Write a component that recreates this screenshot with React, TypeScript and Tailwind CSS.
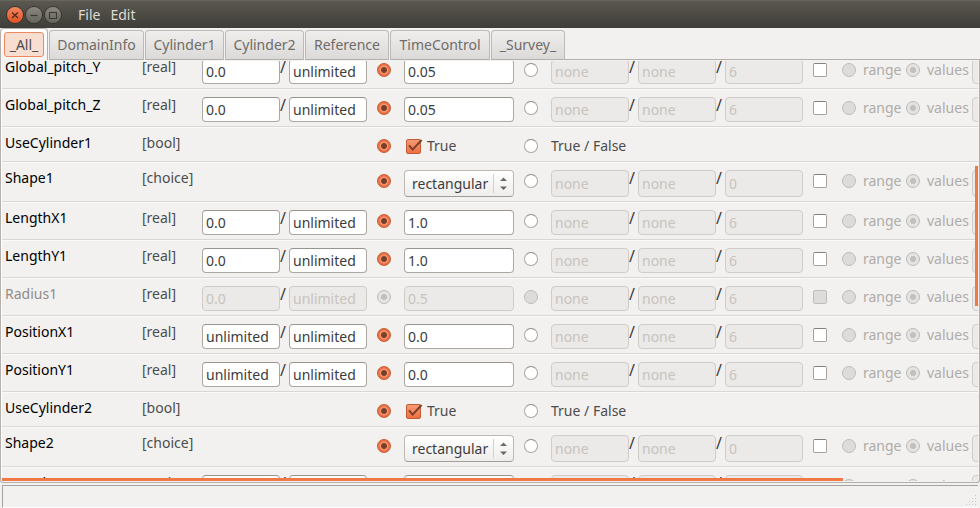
import { useLayoutEffect, useRef } from "react";
import clsx from "clsx";

type Kind = "real" | "bool" | "choice";

interface Param {
  name: string;
  kind: Kind;
  value: string;
  min?: string;
  disabled?: boolean;
}

const tabs = [
  { label: "DomainInfo", width: "w-[95px]" },
  { label: "Cylinder1", width: "w-[79px]" },
  { label: "Cylinder2", width: "w-[79px]" },
  { label: "Reference", width: "w-[84px]" },
  { label: "TimeControl", width: "w-[100px]" },
  { label: "_Survey_", width: "w-[74px]" },
];

const params: Param[] = [
  { name: "Global_pitch_Y", kind: "real", min: "0.0", value: "0.05" },
  { name: "Global_pitch_Z", kind: "real", min: "0.0", value: "0.05" },
  { name: "UseCylinder1", kind: "bool", value: "True" },
  { name: "Shape1", kind: "choice", value: "rectangular" },
  { name: "LengthX1", kind: "real", min: "0.0", value: "1.0" },
  { name: "LengthY1", kind: "real", min: "0.0", value: "1.0" },
  { name: "Radius1", kind: "real", min: "0.0", value: "0.5", disabled: true },
  { name: "PositionX1", kind: "real", min: "unlimited", value: "0.0" },
  { name: "PositionY1", kind: "real", min: "unlimited", value: "0.0" },
  { name: "UseCylinder2", kind: "bool", value: "True" },
  { name: "Shape2", kind: "choice", value: "rectangular" },
  { name: "LengthX2", kind: "real", min: "0.0", value: "1.0" },
];

function Field({ label, value, disabled, tall }: { label: string; value: string; disabled?: boolean; tall?: boolean }) {
  return (
    <input
      type="text"
      aria-label={label}
      defaultValue={value}
      disabled={disabled}
      className={clsx(
        "mt-2 w-full min-w-0 rounded-[4px] border px-[3px] text-sm outline-none",
        tall ? "h-[27px]" : "h-[25px]",
        disabled
          ? "border-[#cfccc9] bg-[#ebeae8] text-[#c8c3be]"
          : "border-[#aba7a2] border-t-[#98948f] bg-white text-[#3c3c3c]",
      )}
    />
  );
}

function Slash() {
  return <span className="pt-1.5 text-base leading-5 text-[#3c3c3c]">/</span>;
}

function Radio({ label, group, checked, disabled }: { label: string; group: string; checked?: boolean; disabled?: boolean }) {
  return (
    <input
      type="radio"
      aria-label={label}
      name={group}
      defaultChecked={checked}
      disabled={disabled}
      className={clsx(
        "mt-3 size-3.5 shrink-0 appearance-none rounded-full border",
        disabled && "border-[#bfbcb9] bg-[#dddcda]",
        disabled && checked && "bg-[radial-gradient(circle,#c2bfbc_0,#c2bfbc_2.5px,#e4e3e1_3.5px)]",
        !disabled && checked && "border-[#c25a33] bg-[radial-gradient(circle,#7a3f29_0,#7a3f29_2.5px,#f79a74_3.5px,#ee6f42_5px)]",
        !disabled && !checked && "border-[#aaa6a2] border-t-[#8f8b87] bg-white",
      )}
    />
  );
}

function TrueBox({ name }: { name: string }) {
  return (
    <label className="mt-[9px] flex h-5 items-center gap-1.5 pl-0.5 text-sm leading-5 text-[#4c4c4c]">
      <span className="relative size-[15px]">
        <input
          type="checkbox"
          name={name}
          defaultChecked
          className="block size-[15px] appearance-none rounded-[2px] border border-[#c25a33] bg-linear-to-b from-[#f79a74] to-[#ee6f42]"
        />
        <svg viewBox="0 0 17 17" className="pointer-events-none absolute -top-px left-0 size-[17px]" aria-hidden="true">
          <path d="M3 7.4 L6.6 11.6 L15.6 2" fill="none" stroke="#7a3f29" strokeWidth="2" />
        </svg>
      </span>
      True
    </label>
  );
}

function Choice({ name, value }: { name: string; value: string }) {
  return (
    <div className="relative mt-2">
      <select
        aria-label={name}
        defaultValue={value}
        className="block h-[27px] w-full appearance-none rounded-[4px] border border-[#bdb9b5] border-b-[#a19d99] bg-linear-to-b from-white to-[#eeedeb] pl-[7px] text-sm text-[#3c3c3c] outline-none"
      >
        <option>rectangular</option>
        <option>circular</option>
      </select>
      <svg viewBox="0 0 22 27" className="pointer-events-none absolute top-0 right-0 h-[27px] w-[22px]" aria-hidden="true">
        <path d="M1.5 4V23" stroke="#d3d0cd" />
        <path d="M8 11L11.5 7.5L15 11ZM8 16.5L11.5 20L15 16.5Z" fill="#6a6764" />
      </svg>
    </div>
  );
}

function Row({ param }: { param: Param }) {
  const { name, kind, value, min, disabled } = param;
  const tall = kind === "choice";
  return (
    <div
      role="group"
      aria-label={name}
      className={clsx(
        "grid shrink-0 grid-cols-[137px_60px_78px_9px_78px_10px_27px_110px_10px_27px_78px_9px_78px_9px_78px_10px_29px_21px_43px_21px_45px_78px] items-start border-b border-b-[#d9d7d5] pl-[3px] text-sm text-[#4c4c4c] shadow-[inset_0_1px_0_#fbfafa]",
        kind === "real" && "h-[38px]",
        kind === "bool" && "h-[35px]",
        kind === "choice" && "h-10",
      )}
    >
      <span className={clsx("pt-1.5 leading-5", disabled ? "text-[#8f8c89]" : "text-black")}>{name}</span>
      <span className="pt-1.5 leading-5">[{kind}]</span>
      {kind === "real" ? (
        <>
          <Field label={`${name} minimum`} value={min ?? ""} disabled={disabled} />
          <Slash />
          <Field label={`${name} maximum`} value="unlimited" disabled={disabled} />
        </>
      ) : (
        <span className="col-span-3" />
      )}
      <span />
      <Radio label={`${name} fixed`} group={`${name}-mode`} checked disabled={disabled} />
      {kind === "real" && <Field label={name} value={value} disabled={disabled} />}
      {kind === "bool" && <TrueBox name={name} />}
      {kind === "choice" && <Choice name={name} value={value} />}
      <span />
      <Radio label={`${name} varied`} group={`${name}-mode`} disabled={disabled} />
      {kind === "bool" ? (
        <span className="pt-[9px] leading-5 whitespace-nowrap">True / False</span>
      ) : (
        <>
          <Field label={`${name} from`} value="none" disabled tall={tall} />
          <Slash />
          <Field label={`${name} to`} value="none" disabled tall={tall} />
          <Slash />
          <Field label={`${name} steps`} value={tall ? "0" : "6"} disabled tall={tall} />
          <span />
          <input
            type="checkbox"
            aria-label={`${name} list`}
            disabled={disabled}
            className={clsx(
              "mt-3 size-3.5 appearance-none rounded-[2px] border",
              disabled ? "border-[#bfbcb9] bg-[#dddcda]" : "border-[#a5a19d] border-t-[#85817d] bg-white",
            )}
          />
          <Radio label={`${name} range`} group={`${name}-list`} disabled />
          <span className="pt-[9px] leading-5 text-[#b0aca8]">range</span>
          <Radio label={`${name} values`} group={`${name}-list`} checked disabled />
          <span className="pt-[9px] leading-5 text-[#b0aca8]">values</span>
          <Field label={`${name} value list`} value="" disabled tall={tall} />
        </>
      )}
    </div>
  );
}

function TitleBar() {
  return (
    <header className="flex h-7 shrink-0 items-center border-t border-[#66645c] bg-linear-to-b from-[#5a584f] to-[#3e3d38] pl-[7px]">
      <div className="flex gap-[3px]">
        <button aria-label="Close" className="size-4 rounded-full bg-linear-to-b from-[#f58660] to-[#e2501f] ring-1 ring-[#35342f]">
          <svg viewBox="0 0 16 16" className="size-4">
            <path d="M5 5.5L11 11M11 5.5L5 11" stroke="#4a2a1c" strokeWidth="1.2" />
          </svg>
        </button>
        <button aria-label="Minimize" className="size-4 rounded-full bg-linear-to-b from-[#8a887f] to-[#66645d] ring-1 ring-[#35342f]">
          <svg viewBox="0 0 16 16" className="size-4">
            <path d="M4.5 8.5H11.5" stroke="#3a3934" strokeWidth="1.2" />
          </svg>
        </button>
        <button aria-label="Maximize" className="size-4 rounded-full bg-linear-to-b from-[#8a887f] to-[#66645d] ring-1 ring-[#35342f]">
          <svg viewBox="0 0 16 16" className="size-4">
            <path d="M4.5 5.5H11.5V11.5H4.5Z" fill="none" stroke="#3a3934" strokeWidth="1.1" />
          </svg>
        </button>
      </div>
      <nav className="flex gap-2.5 pl-[17px] text-sm text-[#dfdbd2]">
        <button>File</button>
        <button>Edit</button>
      </nav>
    </header>
  );
}

export default function App() {
  const list = useRef<HTMLDivElement>(null);

  useLayoutEffect(() => {
    if (list.current) list.current.scrollTop = 10;
  }, []);

  return (
    <div className="flex h-screen flex-col overflow-hidden bg-[#f2f1f0] font-['Noto_Sans',sans-serif]">
      <TitleBar />

      <div role="tablist" className="flex h-8 shrink-0 items-end gap-px">
        <button
          role="tab"
          aria-selected="true"
          className="flex h-8 w-12 rounded-t-[4px] border border-b-0 border-[#b3afab] bg-white bg-linear-to-b from-white to-[#f5f4f3] p-[3px] text-sm text-[#4c4c4c]"
        >
          <span className="flex h-[25px] w-10 items-center justify-center rounded-[3px] border border-[#f0895f] bg-[#f8ddd1]">_All_</span>
        </button>
        {tabs.map((tab) => (
          <button
            key={tab.label}
            role="tab"
            aria-selected="false"
            className={clsx(
              "h-[30px] rounded-t-[4px] border border-[#bdb9b6] border-b-[#b3afab] bg-linear-to-b from-[#efeeed] to-[#dcdad8] text-sm text-[#6f6c69]",
              tab.width,
            )}
          >
            {tab.label}
          </button>
        ))}
        <span className="-ml-px h-px flex-1 bg-[#b3afab]" />
      </div>

      <main className="relative flex min-h-0 flex-1 flex-col rounded-b-[3px] border border-t-0 border-[#b3afab]">
        <div ref={list} className="mt-px mr-px mb-px flex min-h-0 flex-1 flex-col overflow-hidden border-l border-l-white">
          {params.map((param) => (
            <Row key={param.name} param={param} />
          ))}
        </div>
        <div className="absolute top-1/4 right-px h-1/3 w-[3px] bg-[#f07746]" />
        <div className="absolute bottom-px left-px h-[3px] w-[86%] bg-[#f07746]" />
      </main>

      <footer className="mx-0.5 mt-0.5 flex h-[23px] shrink-0 items-end justify-end border-t border-b border-l border-t-[#a5a19e] border-b-white border-l-[#a5a19e]">
        <svg viewBox="0 0 12 12" className="size-3" fill="#c9c6c3" aria-hidden="true">
          <path d="M9 0h1v1h-1zM6 3h1v1h-1zM9 3h1v1h-1zM3 6h1v1h-1zM6 6h1v1h-1zM9 6h1v1h-1zM0 9h1v1h-1zM3 9h1v1h-1zM6 9h1v1h-1zM9 9h1v1h-1z" />
        </svg>
      </footer>
    </div>
  );
}
